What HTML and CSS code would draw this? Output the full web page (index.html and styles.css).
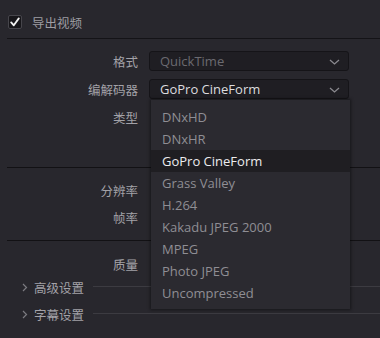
FILE: index.html
```html
<!DOCTYPE html>
<html lang="zh">
<head>
<meta charset="utf-8">
<link rel="stylesheet" href="styles.css">
</head>
<body>
<div class="panel">
  <div class="header">
    <span class="checkbox"><svg width="10" height="10" viewBox="0 0 10 10"><path d="M1.2 5.4 L3.8 8.3 L8.8 1.4" fill="none" stroke="#f2f2f2" stroke-width="1.8" stroke-linecap="round" stroke-linejoin="round"/></svg></span>
    <span class="title">导出视频</span>
  </div>
  <div class="section s1">
    <div class="row">
      <span class="label">格式</span>
      <div class="select dim"><span>QuickTime</span><svg class="chev" width="11" height="6" viewBox="0 0 11 6"><path d="M1 1 L5.5 5 L10 1" fill="none" stroke="#8a898f" stroke-width="1.3"/></svg></div>
    </div>
    <div class="row">
      <span class="label">编解码器</span>
      <div class="select"><span>GoPro CineForm</span><svg class="chev" width="11" height="6" viewBox="0 0 11 6"><path d="M1 1 L5.5 5 L10 1" fill="none" stroke="#8a898f" stroke-width="1.3"/></svg></div>
    </div>
    <div class="row">
      <span class="label">类型</span>
    </div>
  </div>
  <div class="section s2">
    <div class="row r27"><span class="label">分辨率</span></div>
    <div class="row r27"><span class="label">帧率</span></div>
  </div>
  <div class="section s3">
    <div class="row"><span class="label">质量</span></div>
    <div class="collapse first">
      <svg class="arrow" width="6" height="9" viewBox="0 0 6 9"><path d="M1 1 L4.5 4.5 L1 8" fill="none" stroke="#7c7b81" stroke-width="1.2"/></svg>
      <span class="ctitle">高级设置</span>
      <span class="cline"></span>
    </div>
    <div class="collapse">
      <svg class="arrow" width="6" height="9" viewBox="0 0 6 9"><path d="M1 1 L4.5 4.5 L1 8" fill="none" stroke="#7c7b81" stroke-width="1.2"/></svg>
      <span class="ctitle">字幕设置</span>
      <span class="cline"></span>
    </div>
  </div>
  <ul class="menu">
    <li>DNxHD</li>
    <li>DNxHR</li>
    <li class="active">GoPro CineForm</li>
    <li>Grass Valley</li>
    <li>H.264</li>
    <li>Kakadu JPEG 2000</li>
    <li>MPEG</li>
    <li>Photo JPEG</li>
    <li>Uncompressed</li>
  </ul>
</div>
</body>
</html>
```
FILE: styles.css
```css
html, body {
  margin: 0;
  padding: 0;
  background: #28272d;
}
body {
  width: 380px;
  height: 338px;
  overflow: hidden;
  font-family: "Open Sans", "Noto Sans CJK SC", sans-serif;
  font-size: 13px;
  color: #a3a2a8;
}
.panel {
  position: relative;
  height: 338px;
}
.header {
  margin-left: 7px;
  border-bottom: 1px solid #141317;
  display: flex;
  align-items: center;
  box-sizing: border-box;
  height: 39px;
  padding-top: 6px;
}
.checkbox {
  width: 14px;
  height: 14px;
  margin-left: 1px;
  box-sizing: border-box;
  border: 1px solid #46454b;
  border-radius: 2px;
  background: #17161a;
  display: flex;
  align-items: center;
  justify-content: center;
}
.title {
  margin-left: 10px;
  font-size: 12.5px;
  color: #9e9da3;
}
.section {
  margin-left: 7px;
  border-bottom: 1px solid #121114;
}
.s1 { padding: 8px 0 36px; }
.s2 { padding: 9px 0 9px; }
.s3 { padding: 9px 0 0; border-bottom: none; }
.row {
  height: 28px;
  display: grid;
  grid-template-columns: 131px 200px;
  column-gap: 11px;
  align-items: center;
}
.row.r27 { height: 27px; }
.label {
  text-align: right;
  font-size: 12.5px;
  color: #a3a2a8;
}
.select {
  height: 20px;
  box-sizing: border-box;
  border: 1px solid #151418;
  border-radius: 3px;
  background: #1f1e23;
  display: flex;
  align-items: center;
  justify-content: space-between;
  padding: 0 8px 0 10px;
  color: #dcdcdf;
}
.select.dim { color: #6b6a70; }
.chev { margin-top: 1px; }
.collapse {
  height: 22px;
  display: flex;
  align-items: center;
  margin-left: 15px;
}
.collapse.first { margin-top: -2px; }
.collapse + .collapse { margin-top: 5px; }
.arrow { flex: none; }
.ctitle {
  margin-left: 6px;
  font-size: 12.5px;
  color: #a3a2a8;
}
.cline {
  flex: 1;
  height: 1px;
  background: #3c3b41;
  margin-left: 9px;
  margin-bottom: 2px;
}
.menu {
  position: absolute;
  left: 151px;
  top: 100px;
  width: 199px;
  height: 209px;
  box-sizing: border-box;
  margin: 0;
  padding: 6px 0 0;
  list-style: none;
  background: #2b2a30;
  box-shadow: 0 0 3px 1px rgba(0, 0, 0, 0.45);
}
.menu li {
  height: 22px;
  line-height: 22px;
  padding-left: 11px;
  color: #8f8e94;
}
.menu li.active {
  background: #1f1e22;
  color: #ececee;
}
```
